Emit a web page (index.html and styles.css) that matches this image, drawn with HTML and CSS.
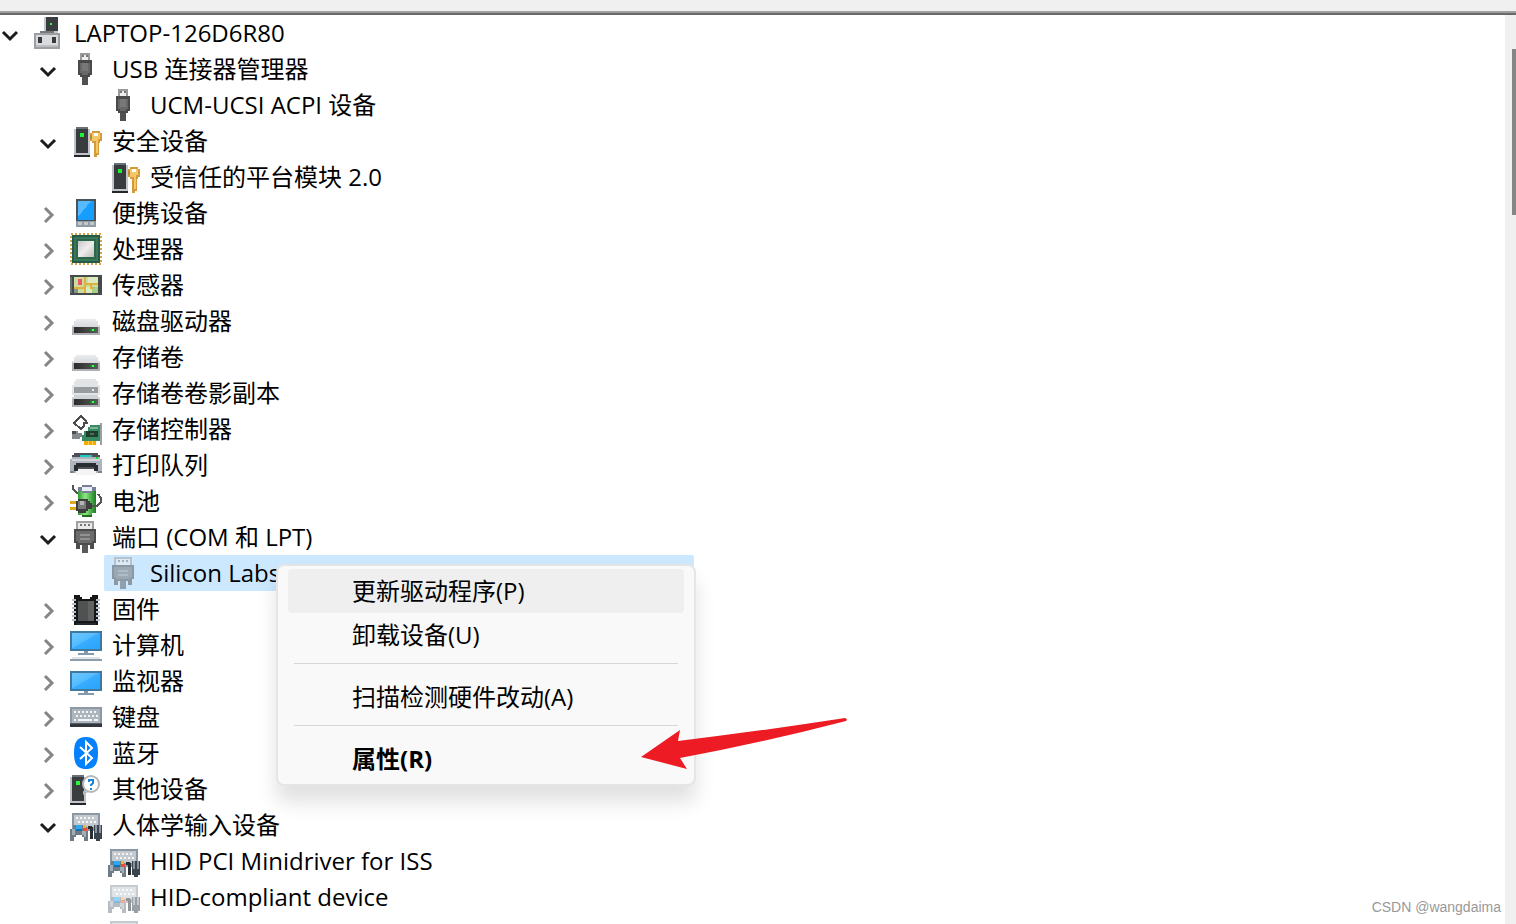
FILE: index.html
```
<!DOCTYPE html>
<html lang="zh-CN">

<head>
  <title>设备管理器</title>
  <meta charset="UTF-8">
  <meta name="viewport" content="width=device-width, initial-scale=1">
  <link rel="stylesheet" href="styles.css">
</head>

<body>
  <!-- Icon set -->
  <svg class="sprite" aria-hidden="true">
    <defs>
      <linearGradient id="screen" x1="0" y1="0" x2="1" y2="1">
        <stop offset="0" stop-color="#6cc6ff" />
        <stop offset=".45" stop-color="#55bcff" />
        <stop offset=".5" stop-color="#38adff" />
        <stop offset="1" stop-color="#2ba4fb" />
      </linearGradient>
      <linearGradient id="silver" x1="0" y1="0" x2="1" y2="1">
        <stop offset="0" stop-color="#c6c6c6" />
        <stop offset=".5" stop-color="#eeeeee" />
        <stop offset="1" stop-color="#bdbdbd" />
      </linearGradient>
      <linearGradient id="lid" x1="0" y1="0" x2="0" y2="1">
        <stop offset="0" stop-color="#e9ebed" />
        <stop offset="1" stop-color="#c3c7cb" />
      </linearGradient>
      <linearGradient id="dark" x1="0" y1="0" x2="1" y2="0">
        <stop offset="0" stop-color="#2b2b2b" />
        <stop offset="1" stop-color="#5a5a5a" />
      </linearGradient>
      <linearGradient id="cell" x1="0" y1="0" x2="1" y2="0">
        <stop offset="0" stop-color="#2f9a35" />
        <stop offset=".4" stop-color="#8bea7f" />
        <stop offset="1" stop-color="#1c7a24" />
      </linearGradient>
    </defs>

    <symbol id="open" viewBox="0 0 20 20">
      <path d="M3 9l7 7 7-7" fill="none" stroke="#1c1c1c" stroke-width="3" />
    </symbol>
    <symbol id="closed" viewBox="0 0 20 20">
      <path d="M7 5l7 7-7 7" fill="none" stroke="#868686" stroke-width="3" />
    </symbol>

    <symbol id="pc" viewBox="0 0 32 32">
      <path d="M12 0h14v16H12z" fill="#c5c8cb" />
      <path d="M14 0h12v14H14z" fill="#3a3d3f" />
      <path d="M18 6h2v2h-2z" fill="#33ff4d" />
      <path d="M8 14h14v2H8z" fill="#777b80" />
      <path d="M2 16h26v16H2z" fill="#9b9ea3" />
      <path d="M4 18h22v10H4z" fill="#dadbdd" />
      <path d="M4 28h22v2H4z" fill="#bcbec2" />
      <path d="M6 20h4v6H6zM20 20h4v6h-4z" fill="#383b3d" />
    </symbol>

    <symbol id="usb" viewBox="0 0 32 32">
      <path d="M10 0h10v8H10z" fill="#9a9a9a" />
      <path d="M12 2h6v6h-6z" fill="#ededed" />
      <path d="M12 2h2v2h-2zM16 2h2v2h-2z" fill="#777" />
      <path d="M8 7h14v15h-2v2H10v-2H8z" fill="#4a4a4a" />
      <path d="M10 10h10v10h-2v2h-6v-2h-2z" fill="#686868" />
      <path d="M12 10h6v8h-6z" fill="#787878" />
      <path d="M12 24h6v8h-6z" fill="#505050" />
    </symbol>

    <symbol id="security" viewBox="0 0 32 32">
      <path d="M4 4h2V2h12v2h2v26H4z" fill="#c1c5c9" />
      <path d="M6 4h12v24H6z" fill="#393c3d" />
      <path d="M6 2h12v2H6z" fill="#67717a" />
      <path d="M10 8h4v4h-4z" fill="#1cf236" />
      <path d="M4 30h16v2H4z" fill="#242729" />
      <path d="M22 6h8v2h2v8h-2v2h-1v12h-2v2h-3V18h-2v-2h-2V8h2z" fill="#d39b3c" />
      <path d="M22 8h8v6h-2v14h-2V16h-4z" fill="#f3c968" />
      <path d="M24 8h4v3h-4z" fill="#fff" />
      <path d="M20 10h2v4h-2z" fill="#ba8836" />
    </symbol>

    <symbol id="phone" viewBox="0 0 32 32">
      <path d="M6 2h20v28H6z" fill="#4a535a" />
      <path d="M8 4h16v19H8z" fill="#159dff" />
      <path d="M8 4h13L8 20z" fill="#56baff" />
      <path d="M6 24h20v6H6z" fill="#919ca7" />
      <path d="M8 25h4v3H8zM14 25h4v3h-4zM20 25h4v3h-4z" fill="#c3c8cc" />
    </symbol>

    <symbol id="cpu" viewBox="0 0 32 32">
      <path d="M1 1h30v30H1z" fill="none" stroke="#d8a44b" stroke-width="2" stroke-dasharray="2 2" />
      <path d="M2 2h28v28H2z" fill="#235b46" />
      <path d="M4 4h24v24H4z" fill="#397558" />
      <path d="M6 6h20v20H6z" fill="#2c674c" />
      <path d="M8 8h16v16H8z" fill="url(#silver)" />
    </symbol>

    <symbol id="sensor" viewBox="0 0 32 32">
      <path d="M0 6h32v20H0z" fill="#454b4c" />
      <path d="M4 8h24v16H4z" fill="#cbdc9f" />
      <path d="M18 8h10v6H18zM16 18h6v6h-6z" fill="#dce9bc" />
      <path d="M22 18h6v6h-6z" fill="#a9ce85" />
      <path d="M14 8h2v16h-2zM16 14h12v2H16zM4 18h10v2H4zM20 16h2v2h2v2h-4z" fill="#e0b03f" />
      <path d="M8 10h4v6H8z" fill="#ed5964" />
      <path d="M4 20h4v4H4z" fill="#86938b" />
      <path d="M0 8h2v16H0z" fill="#6a706c" />
    </symbol>

    <symbol id="disk" viewBox="0 0 32 32">
      <path d="M6 14h20v2h2v4h2v10H2V20h2v-4h2z" fill="url(#lid)" />
      <path d="M2 22h28v8H2z" fill="#adb1b5" />
      <path d="M4 22h24v6H4z" fill="url(#dark)" />
      <path d="M20 24h6v2h-6z" fill="#168b2e" />
      <path d="M22 24h2v2h-2z" fill="#39ff51" />
    </symbol>

    <symbol id="shadow" viewBox="0 0 32 32">
      <path d="M6 2h20v2h2v4h2v10H2V8h2V4h2z" fill="#e3e4e6" />
      <path d="M4 10h24v6H4z" fill="#999c9e" />
      <path d="M22 12h2v2h-2z" fill="#e8e8e8" />
      <path d="M4 18h24v2h2v10H2V20h2z" fill="#d0d3d6" />
      <path d="M2 22h28v8H2z" fill="#adb1b5" />
      <path d="M4 22h24v6H4z" fill="url(#dark)" />
      <path d="M20 24h6v2h-6z" fill="#168b2e" />
      <path d="M22 24h2v2h-2z" fill="#39ff51" />
    </symbol>

    <symbol id="storage" viewBox="0 0 32 32">
      <path d="M17 9l-6-6-7 7 7 6 3-3v-3h4" fill="none" stroke="#4a4d4f" stroke-width="2" />
      <path d="M2 18h6v2h4v4h-2v2H2z" fill="#85898c" />
      <path d="M2 18h4v3H2z" fill="#4c5053" />
      <path d="M18 14h2v-2h10v16H12v-6h2v-4h4z" fill="#388a60" />
      <path d="M20 14h8v2h-8z" fill="#7fb397" />
      <path d="M16 18h12v6H16z" fill="#203d2d" />
      <path d="M20 20h4v2h-4z" fill="#55695e" />
      <path d="M14 28h12v4H14z" fill="#f5a900" />
      <path d="M18 28h1v4h-1zM22 28h1v4h-1z" fill="#ffd459" />
      <path d="M30 10h2v22h-2z" fill="#9b9fa1" />
    </symbol>

    <symbol id="printer" viewBox="0 0 32 32">
      <path d="M4 4h24v2h2v4H2V6h2z" fill="#4a5056" />
      <path d="M2 8h28v2h2v14H0V10h2z" fill="#aeb5bd" />
      <path d="M2 10h28v2H2z" fill="#d2d6da" />
      <path d="M10 6h12v2H10z" fill="#20c9bf" />
      <path d="M26 8h2v2h-2z" fill="#00ef19" />
      <path d="M4 16h2v-2h20v2h2v6H4z" fill="#292c30" />
      <path d="M8 18h16v2H8z" fill="#4d5154" />
      <path d="M8 20h16v2h2v4H6v-4h2z" fill="#f4f4f4" />
      <path d="M0 22h4v2H0zM28 22h4v2h-4z" fill="#7c858f" />
    </symbol>

    <symbol id="battery" viewBox="0 0 32 32">
      <path d="M12 0h10v2h4v26h-4v4H12v-2H8V4h4z" fill="url(#cell)" />
      <path d="M12 0h10v2h4v4h-4v2H12V6H8V2h4z" fill="#777f98" />
      <path d="M12 2h10v4H12z" fill="#e9edf8" />
      <path d="M12 30h10v2H12z" fill="#276b22" />
      <path d="M3 0v4l5 5M28 9l3 4v4l-4 4h-8" fill="none" stroke="#555" stroke-width="2" />
      <path d="M0 16h7v3H0zM0 22h7v3H0z" fill="#dfa81d" />
      <path d="M8 14h10v2h2v2h2v6h-4v2h-2v2H8v-2H6V16h2z" fill="#3d3f3e" />
      <path d="M8 16h8v8H8z" fill="#777a78" />
      <path d="M10 16h4v4h-4z" fill="#b5b7b5" />
    </symbol>

    <symbol id="port" viewBox="0 0 32 32">
      <path d="M6 0h18v8H6z" fill="#a0a0a0" />
      <path d="M8 2h14v6H8z" fill="#eaeaea" />
      <path d="M10 3h2v2h-2zM14 3h2v2h-2zM18 3h2v2h-2z" fill="#777" />
      <path d="M4 8h22v14h-2v6h-4v-4H10v4H6v-6H4z" fill="#4c4c4c" />
      <path d="M6 10h18v10h-2v2H8v-2H6z" fill="#6c6c6c" />
      <path d="M10 13h10v2H10zM10 17h10v2H10z" fill="#929292" />
      <path d="M12 24h6v8h-6z" fill="#5a5a5a" />
    </symbol>

    <symbol id="chip" viewBox="0 0 32 32">
      <path d="M4 2h6v2h2v2h8V4h2V2h6v30H4z" fill="#151617" />
      <path d="M8 8h16v20H8z" fill="#505151" />
      <path d="M18 8h6v20h-6z" fill="#616262" />
      <path d="M4 6v24M28 6v24" stroke="#b4c0cb" stroke-width="4" stroke-dasharray="2 2" />
      <path d="M6 30h20v2H6z" fill="#25282a" />
    </symbol>

    <symbol id="computer" viewBox="0 0 32 32">
      <path d="M0 2h32v20H0z" fill="#3f79a2" />
      <path d="M2 4h28v16H2z" fill="url(#screen)" />
      <path d="M14 22h4v2h6v2H8v-2h6z" fill="#8499ac" />
      <path d="M2 28h28v2H2z" fill="#dfe4e8" />
      <path d="M0 30h32v2H0z" fill="#8c9dac" />
    </symbol>

    <symbol id="monitor" viewBox="0 0 32 32">
      <path d="M0 6h32v20H0z" fill="#3f79a2" />
      <path d="M2 8h28v16H2z" fill="url(#screen)" />
      <path d="M14 26h4v2h6v2H8v-2h6z" fill="#8499ac" />
    </symbol>

    <symbol id="keyboard" viewBox="0 0 32 32">
      <path d="M0 6h32v16H0z" fill="#8c98a4" />
      <path d="M2 8h28v14H2z" fill="#adb5bd" />
      <path d="M4 11h24M6 15h22" stroke="#f4f5f6" stroke-width="2" stroke-dasharray="2 2" />
      <path d="M4 18h2v2H4zM8 18h14v2H8zM24 18h4v2h-4z" fill="#f4f5f6" />
      <path d="M0 22h32v4H0z" fill="#30363b" />
      <path d="M0 22h32v1H0z" fill="#545e67" />
    </symbol>

    <symbol id="bluetooth" viewBox="0 0 32 32">
      <path d="M16 0c9 0 12 5 12 16s-3 16-12 16S4 27 4 16 7 0 16 0z" fill="#0581fb" />
      <path d="M10 10l12 11-6 6V5l6 6-12 11" fill="none" stroke="#fff" stroke-width="2" />
    </symbol>

    <symbol id="other" viewBox="0 0 32 32">
      <path d="M0 4h2V2h12v2h2v26H0z" fill="#c1c5c9" />
      <path d="M2 4h12v24H2z" fill="#3b3e3f" />
      <path d="M2 2h12v2H2z" fill="#68717a" />
      <path d="M6 8h4v4H6z" fill="#28f83e" />
      <path d="M0 30h16v2H0z" fill="#242729" />
      <path d="M13 18v4l5-3" fill="#b4b8bc" />
      <circle cx="21" cy="11" r="8" fill="#fff" stroke="#b4b8bc" stroke-width="2" />
      <path d="M19 9V7h4v3l-2 2v1M21 15v2" fill="none" stroke="#1687d9" stroke-width="2" />
    </symbol>

    <symbol id="hid" viewBox="0 0 32 32">
      <path d="M2 4h28v18H2z" fill="#8b98a4" />
      <path d="M4 6h24v12H4z" fill="#c3c9cf" />
      <path d="M6 9h20M8 13h18" stroke="#f5f6f7" stroke-width="2" stroke-dasharray="2 2" />
      <path d="M3 16h12v2h2v4h1v10h-4v-4h-2v-2H6v2H4v4H0V20h3z" fill="#6f7c87" />
      <path d="M2 20h3v6H2zM12 22h4v6h-2v-2h-2z" fill="#a3adb5" />
      <path d="M6 16h6v4H6z" fill="#2ba9f3" />
      <path d="M6 20h6v2H6z" fill="#1170b3" />
      <path d="M13 16h3v3h-3z" fill="#efb533" />
      <path d="M14 19h3v3h-3z" fill="#e64e3d" />
      <path d="M18 17h4v3h-4zM20 18h3v12h-3z" fill="#272d32" />
      <path d="M24 16h8v14h-2v2h-4v-2h-2z" fill="#39444c" />
      <path d="M25 16h2v8h-2zM29 16h2v8h-2z" fill="#8995a0" />
    </symbol>
  </svg>

  <header class="toolbar"></header>

  <div class="content">
    <main class="tree">
      <ul>
        <li>
          <div class="row">
            <button class="twisty" aria-label="折叠"><svg><use href="#open" /></svg></button>
            <svg class="icon"><use href="#pc" /></svg>
            <span>LAPTOP-126D6R80</span>
          </div>
          <ul>
            <li>
              <div class="row">
                <button class="twisty" aria-label="折叠"><svg><use href="#open" /></svg></button>
                <svg class="icon"><use href="#usb" /></svg>
                <span>USB 连接器管理器</span>
              </div>
              <ul>
                <li class="row leaf">
                  <svg class="icon"><use href="#usb" /></svg>
                  <span>UCM-UCSI ACPI 设备</span>
                </li>
              </ul>
            </li>
            <li>
              <div class="row">
                <button class="twisty" aria-label="折叠"><svg><use href="#open" /></svg></button>
                <svg class="icon"><use href="#security" /></svg>
                <span>安全设备</span>
              </div>
              <ul>
                <li class="row leaf">
                  <svg class="icon"><use href="#security" /></svg>
                  <span>受信任的平台模块 2.0</span>
                </li>
              </ul>
            </li>
            <li class="row">
              <button class="twisty" aria-label="展开"><svg><use href="#closed" /></svg></button>
              <svg class="icon"><use href="#phone" /></svg>
              <span>便携设备</span>
            </li>
            <li class="row">
              <button class="twisty" aria-label="展开"><svg><use href="#closed" /></svg></button>
              <svg class="icon"><use href="#cpu" /></svg>
              <span>处理器</span>
            </li>
            <li class="row">
              <button class="twisty" aria-label="展开"><svg><use href="#closed" /></svg></button>
              <svg class="icon"><use href="#sensor" /></svg>
              <span>传感器</span>
            </li>
            <li class="row">
              <button class="twisty" aria-label="展开"><svg><use href="#closed" /></svg></button>
              <svg class="icon"><use href="#disk" /></svg>
              <span>磁盘驱动器</span>
            </li>
            <li class="row">
              <button class="twisty" aria-label="展开"><svg><use href="#closed" /></svg></button>
              <svg class="icon"><use href="#disk" /></svg>
              <span>存储卷</span>
            </li>
            <li class="row">
              <button class="twisty" aria-label="展开"><svg><use href="#closed" /></svg></button>
              <svg class="icon"><use href="#shadow" /></svg>
              <span>存储卷卷影副本</span>
            </li>
            <li class="row">
              <button class="twisty" aria-label="展开"><svg><use href="#closed" /></svg></button>
              <svg class="icon"><use href="#storage" /></svg>
              <span>存储控制器</span>
            </li>
            <li class="row">
              <button class="twisty" aria-label="展开"><svg><use href="#closed" /></svg></button>
              <svg class="icon"><use href="#printer" /></svg>
              <span>打印队列</span>
            </li>
            <li class="row">
              <button class="twisty" aria-label="展开"><svg><use href="#closed" /></svg></button>
              <svg class="icon"><use href="#battery" /></svg>
              <span>电池</span>
            </li>
            <li>
              <div class="row">
                <button class="twisty" aria-label="折叠"><svg><use href="#open" /></svg></button>
                <svg class="icon"><use href="#port" /></svg>
                <span>端口 (COM 和 LPT)</span>
              </div>
              <ul>
                <li class="row leaf selected">
                  <svg class="icon faded"><use href="#port" /></svg>
                  <span>Silicon Labs</span>
                </li>
              </ul>
            </li>
            <li class="row">
              <button class="twisty" aria-label="展开"><svg><use href="#closed" /></svg></button>
              <svg class="icon"><use href="#chip" /></svg>
              <span>固件</span>
            </li>
            <li class="row">
              <button class="twisty" aria-label="展开"><svg><use href="#closed" /></svg></button>
              <svg class="icon"><use href="#computer" /></svg>
              <span>计算机</span>
            </li>
            <li class="row">
              <button class="twisty" aria-label="展开"><svg><use href="#closed" /></svg></button>
              <svg class="icon"><use href="#monitor" /></svg>
              <span>监视器</span>
            </li>
            <li class="row">
              <button class="twisty" aria-label="展开"><svg><use href="#closed" /></svg></button>
              <svg class="icon"><use href="#keyboard" /></svg>
              <span>键盘</span>
            </li>
            <li class="row">
              <button class="twisty" aria-label="展开"><svg><use href="#closed" /></svg></button>
              <svg class="icon smooth"><use href="#bluetooth" /></svg>
              <span>蓝牙</span>
            </li>
            <li class="row">
              <button class="twisty" aria-label="展开"><svg><use href="#closed" /></svg></button>
              <svg class="icon smooth"><use href="#other" /></svg>
              <span>其他设备</span>
            </li>
            <li>
              <div class="row">
                <button class="twisty" aria-label="折叠"><svg><use href="#open" /></svg></button>
                <svg class="icon"><use href="#hid" /></svg>
                <span>人体学输入设备</span>
              </div>
              <ul>
                <li class="row leaf">
                  <svg class="icon"><use href="#hid" /></svg>
                  <span>HID PCI Minidriver for ISS</span>
                </li>
                <li class="row leaf">
                  <svg class="icon faded"><use href="#hid" /></svg>
                  <span>HID-compliant device</span>
                </li>
                <li class="row leaf">
                  <svg class="icon faded"><use href="#hid" /></svg>
                  <span>HID-compliant device</span>
                </li>
              </ul>
            </li>
          </ul>
        </li>
      </ul>
    </main>
    <div class="scrollbar">
      <div class="thumb"></div>
    </div>
  </div>

  <!-- Context menu of the selected device -->
  <div class="menu">
    <button class="active">更新驱动程序(P)</button>
    <button>卸载设备(U)</button>
    <hr>
    <button>扫描检测硬件改动(A)</button>
    <hr>
    <button class="default">属性(R)</button>
  </div>

  <svg class="arrow" viewBox="0 0 206 52">
    <path d="M0 39L39 12 37 23Q120 13 204 0 207 1 205 3 120 25 39 40L46 51z" fill="#ed1c24" />
  </svg>

  <div class="watermark">CSDN @wangdaima</div>
</body>

</html>
```
FILE: styles.css
```
* {
  box-sizing: border-box;
}

body {
  display: flex;
  flex-direction: column;
  position: relative;
  height: 100vh;
  margin: 0;
  overflow: hidden;
  background-color: #fff;
  color: #000;
  font-family: "Open Sans", "Noto Sans CJK SC", sans-serif;
  font-size: 24px;
  line-height: 36px;
}

.sprite {
  position: absolute;
  width: 0;
  height: 0;
}

/* Strip of the toolbar above the tree */
.toolbar {
  flex: none;
  height: 15px;
  background-color: #f0f0f0;
  border-bottom: 2px solid #696969;
  box-shadow: inset 0 -2px #a0a0a0;
}

.content {
  display: flex;
  flex: 1;
  min-height: 0;
}

/* Device tree */
.tree {
  flex: 1;
  overflow: hidden;
}

.tree ul {
  margin: 0;
  padding: 0;
  list-style: none;
}

.tree ul ul {
  padding-left: 38px;
}

.row {
  display: flex;
  align-items: center;
  height: 36px;
  white-space: nowrap;
}

.twisty {
  width: 20px;
  height: 20px;
  margin-right: 12px;
  padding: 0;
  border: 0;
  background: none;
}

.twisty svg {
  display: block;
  width: 20px;
  height: 20px;
}

.icon {
  flex: none;
  width: 32px;
  height: 32px;
  margin-right: 10px;
  shape-rendering: crispEdges;
}

.smooth {
  shape-rendering: auto;
}

.faded {
  opacity: .5;
}

.leaf {
  margin-left: 28px;
  padding-left: 4px;
}

.selected {
  width: 590px;
  border-radius: 2px;
  background-color: #cce8ff;
}

/* Scrollbar */
.scrollbar {
  width: 11px;
  padding: 34px 0 0 7px;
  background-color: #f0f0f0;
}

.thumb {
  height: 166px;
  background-color: #868686;
}

/* Context menu */
.menu {
  position: absolute;
  top: 564px;
  left: 276px;
  width: 420px;
  padding: 3px 10px;
  border: 2px solid #e5e5e5;
  border-radius: 8px;
  background-color: #f9f9f9;
  box-shadow: 0 16px 20px rgba(0, 0, 0, .12);
}

.menu button {
  display: block;
  width: 100%;
  height: 44px;
  padding: 0 64px;
  border: 0;
  border-radius: 4px;
  background: none;
  color: #000;
  font: inherit;
  text-align: left;
}

.menu .active {
  background-color: #efefef;
}

.menu .default {
  font-weight: bold;
}

.menu hr {
  height: 1px;
  margin: 6px 6px 11px;
  border: 0;
  background-color: #d7d7d7;
}

.arrow {
  position: absolute;
  top: 718px;
  left: 641px;
  width: 206px;
  height: 52px;
}

.watermark {
  position: absolute;
  right: 15px;
  bottom: 7px;
  color: #999;
  font-family: "Liberation Sans", Arial, sans-serif;
  font-size: 14px;
  line-height: 20px;
}
```
